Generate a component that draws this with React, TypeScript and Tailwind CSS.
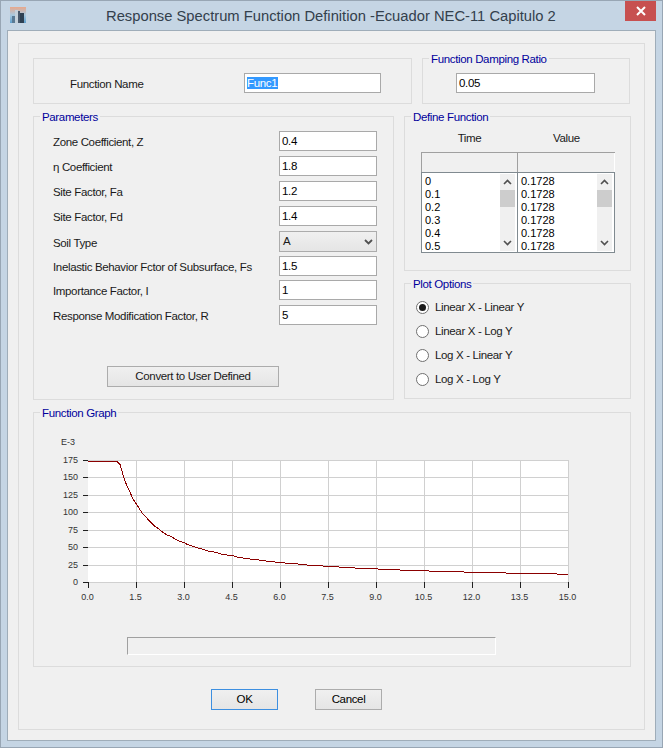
import React from "react";

const params = [
  { label: "Zone Coefficient, Z", value: "0.4", cls: "mt-0" },
  { label: "η Coefficient", value: "1.8", cls: "mt-[5px]" },
  { label: "Site Factor, Fa", value: "1.2", cls: "mt-[5px]" },
  { label: "Site Factor, Fd", value: "1.4", cls: "mt-[5px]" },
  { label: "Soil Type", value: "A", cls: "mt-[5px]", select: true },
  { label: "Inelastic Behavior Fctor of Subsurface, Fs", value: "1.5", cls: "mt-[4px]" },
  { label: "Importance Factor, I", value: "1", cls: "mt-[4px]" },
  { label: "Response Modification Factor, R", value: "5", cls: "mt-[5px]" },
];

const times = ["0", "0.1", "0.2", "0.3", "0.4", "0.5"];
const plotOptions = ["Linear X - Linear Y", "Linear X - Log Y", "Log X - Linear Y", "Log X - Log Y"];
const yTicks = [175, 150, 125, 100, 75, 50, 25, 0];
const xTicks = ["0.0", "1.5", "3.0", "4.5", "6.0", "7.5", "9.0", "10.5", "12.0", "13.5", "15.0"];

const curve: string[] = [];
for (let i = 0; i <= 150; i++) {
  const t = i / 10;
  const v = Math.min(172.8, t > 0 ? 168 / t : 172.8);
  curve.push(`${88 + t * 32},${Math.floor(582 - (v * 122) / 175) + 0.5}`);
}

function Group({ title, className, children }: { title: string; className: string; children?: React.ReactNode }) {
  return (
    <div className={`relative border border-[#dcdcdc] ${className}`}>
      {title && (
        <span className="absolute -top-[7px] left-[6px] bg-[#f0f0f0] px-[2px] text-[#00009c] leading-[14px]">{title}</span>
      )}
      {children}
    </div>
  );
}

function Field({ value, className }: { value: string; className: string }) {
  return (
    <div className={`h-[20px] border border-[#a9a9a9] bg-white pl-[2px] leading-[18px] text-black ${className}`}>{value}</div>
  );
}

function ScrollBar() {
  return (
    <div className="my-[1px] ml-auto mr-[2px] flex w-[15px] flex-col bg-[#f0f0f0]">
      <div className="flex h-[16px] items-center justify-center">
        <svg width="9" height="6" viewBox="0 0 9 6">
          <path d="M1 5 L4.5 1.5 L8 5" fill="none" stroke="#505050" strokeWidth="1.6" />
        </svg>
      </div>
      <div className="h-[17px] bg-[#cdcdcd]" />
      <div className="mt-auto flex h-[16px] items-center justify-center">
        <svg width="9" height="6" viewBox="0 0 9 6">
          <path d="M1 1 L4.5 4.5 L8 1" fill="none" stroke="#505050" strokeWidth="1.6" />
        </svg>
      </div>
    </div>
  );
}

function ListColumn({ rows, className }: { rows: string[]; className: string }) {
  return (
    <div className={`flex h-full ${className}`}>
      <div className="pl-[3px] pt-[2px] text-[11px] tracking-normal text-black">
        {rows.map((r, i) => (
          <div key={i} className="h-[13px] leading-[13px]">{r}</div>
        ))}
      </div>
      <ScrollBar />
    </div>
  );
}

function Chart() {
  return (
    <svg width="596" height="210" viewBox="34 413 596 210" className="block">
      <rect x="88" y="460" width="481" height="122" fill="#ffffff" />
      {yTicks.map((t, i) => {
        const y = Math.round(460 + (i * 122) / 7) + 0.5;
        return (
          <g key={t}>
            <line x1="88" x2="569" y1={y} y2={y} stroke="#d0d0d0" />
            <line x1="83" x2="88" y1={y} y2={y} stroke="#202020" />
            <text x="78" y={y + 2} textAnchor="end" fontSize="9" letterSpacing="0" fill="#333333">{t}</text>
          </g>
        );
      })}
      {xTicks.map((t, i) => {
        const x = 88.5 + i * 48;
        return (
          <g key={t}>
            {i > 0 && <line x1={x} x2={x} y1="460" y2="582" stroke="#d0d0d0" />}
            <line x1={x} x2={x} y1="582" y2="588" stroke="#202020" />
            <text x={x - 1} y="600" textAnchor="middle" fontSize="9" letterSpacing="0" fill="#333333">{t}</text>
          </g>
        );
      })}
      <text x="61" y="445" fontSize="9" letterSpacing="0" fill="#333333">E-3</text>
      <polyline points={curve.join(" ")} fill="none" stroke="#8b0000" strokeWidth="1" shapeRendering="crispEdges" />
    </svg>
  );
}

export default function App() {
  return (
    <div className="flex h-[748px] w-[663px] flex-col overflow-hidden border border-[#98a6b4] bg-[#c5d5e4] font-['Liberation_Sans',sans-serif] text-[11.5px] tracking-[-0.35px] text-[#1a1a1a]">
      <div className="flex h-[29px] flex-none">
        <div className="ml-[9px] mt-[6px] h-[16px] w-[16px]">
          <svg width="16" height="16" viewBox="0 0 16 16">
            <defs>
              <linearGradient id="sky" x1="0" y1="0" x2="0" y2="1">
                <stop offset="0" stopColor="#e8a88c" />
                <stop offset="0.5" stopColor="#a9c9df" />
                <stop offset="1" stopColor="#5f9fcc" />
              </linearGradient>
            </defs>
            <rect width="16" height="16" fill="url(#sky)" />
            <rect x="2" y="9" width="3" height="7" fill="#5a7a94" />
            <rect x="5" y="3" width="3" height="13" fill="#c4d0da" />
            <rect x="8" y="4" width="2" height="12" fill="#48586a" />
            <rect x="10" y="6" width="4" height="10" fill="#2e4052" />
          </svg>
        </div>
        <div className="ml-[80px] mt-[5px] whitespace-nowrap text-[14.75px] leading-[20px] tracking-normal text-[#33404c]">
          Response Spectrum Function Definition -Ecuador NEC-11 Capitulo 2
        </div>
        <div className="ml-auto mr-[6px] flex h-[20px] w-[31px] items-center justify-center bg-[#c75050]">
          <svg width="10" height="10" viewBox="0 0 10 10">
            <path d="M1 1 L9 9 M9 1 L1 9" stroke="#ffffff" strokeWidth="2" />
          </svg>
        </div>
      </div>

      <div className="mx-[6px] mb-[6px] flex-1 border border-[#9fadb9] bg-[#f0f0f0] px-[10px] pb-[10px] pt-[12px]">
        <div className="h-full border border-[#dcdcdc] pl-[14px] pt-[14px]">
          <div className="flex gap-[10px]">
            <Group title="" className="flex h-[46px] w-[379px] pl-[36px] pt-[14px]">
              <div className="w-[174px] pt-[3px]">Function Name</div>
              <div className="h-[20px] w-[137px] border border-[#a9a9a9] bg-white pl-[2px] pt-[3px]">
                <span className="block h-[12px] w-[31px] bg-[#3399ff] leading-[12px] text-white">Func1</span>
              </div>
            </Group>
            <Group title="Function Damping Ratio" className="h-[46px] w-[208px] pl-[33px] pt-[14px]">
              <Field value="0.05" className="w-[139px]" />
            </Group>
          </div>

          <div className="mt-[12px] flex gap-[10px]">
            <Group title="Parameters" className="h-[284px] w-[361px] pl-[19px] pr-[16px] pt-[14px]">
              {params.map((p) => (
                <div key={p.label} className={`flex items-center justify-between ${p.cls}`}>
                  <span className="pt-[2px] leading-[14px]">{p.label}</span>
                  {p.select ? (
                    <div className="flex h-[21px] w-[98px] items-center justify-between border border-[#acacac] bg-gradient-to-b from-[#f0f0f0] to-[#e5e5e5] pl-[3px] pr-[3px]">
                      <span className="pt-[1px]">{p.value}</span>
                      <svg width="9" height="6" viewBox="0 0 9 6">
                        <path d="M1 1 L4.5 4.5 L8 1" fill="none" stroke="#505050" strokeWidth="1.8" />
                      </svg>
                    </div>
                  ) : (
                    <Field value={p.value} className="w-[98px]" />
                  )}
                </div>
              ))}
              <div className="ml-[54px] mt-[41px] flex h-[21px] w-[172px] items-center justify-center border border-[#acacac] bg-gradient-to-b from-[#f0f0f0] to-[#e5e5e5] pt-[1px]">
                Convert to User Defined
              </div>
            </Group>

            <div className="flex w-[227px] flex-col gap-[12px]">
              <Group title="Define Function" className="h-[155px] pl-[16px] pt-[14px]">
                <div className="flex h-[14px] w-[194px] leading-[14px]">
                  <div className="w-[97px] text-center">Time</div>
                  <div className="w-[97px] text-center">Value</div>
                </div>
                <div className="mt-[7px] flex h-[20px] w-[194px] border-l border-t border-[#a0a0a0]">
                  <div className="w-[96px] border-r border-[#a0a0a0]" />
                  <div className="flex-1 border-r border-white" />
                </div>
                <div className="flex h-[81px] w-[194px] border border-[#808a90] bg-white">
                  <ListColumn rows={times} className="w-[96px] border-r border-[#808a90]" />
                  <ListColumn rows={times.map(() => "0.1728")} className="flex-1" />
                </div>
              </Group>
              <Group title="Plot Options" className="h-[116px] pl-[11px] pt-[11px]">
                {plotOptions.map((o, i) => (
                  <div key={o} className="flex h-[24px] items-center gap-[6px]">
                    <div className="flex h-[13px] w-[13px] items-center justify-center rounded-full border border-[#707070] bg-white">
                      {i === 0 && <div className="h-[7px] w-[7px] rounded-full bg-[#1a1a1a]" />}
                    </div>
                    <span className="pt-[1px]">{o}</span>
                  </div>
                ))}
              </Group>
            </div>
          </div>

          <Group title="Function Graph" className="mt-[12px] h-[255px] w-[598px]">
            <Chart />
            <div className="ml-[93px] mt-[14px] h-[18px] w-[369px] border border-b-white border-l-[#a0a0a0] border-r-white border-t-[#a0a0a0]" />
          </Group>

          <div className="ml-[178px] mt-[22px] flex gap-[37px]">
            <div className="flex h-[21px] w-[67px] items-center justify-center border border-[#3d8fe0] bg-gradient-to-b from-[#f0f0f0] to-[#e5e5e5] pt-[1px] text-black">OK</div>
            <div className="flex h-[21px] w-[67px] items-center justify-center border border-[#acacac] bg-gradient-to-b from-[#f0f0f0] to-[#e5e5e5] pt-[1px] text-black">Cancel</div>
          </div>
        </div>
      </div>
    </div>
  );
}
